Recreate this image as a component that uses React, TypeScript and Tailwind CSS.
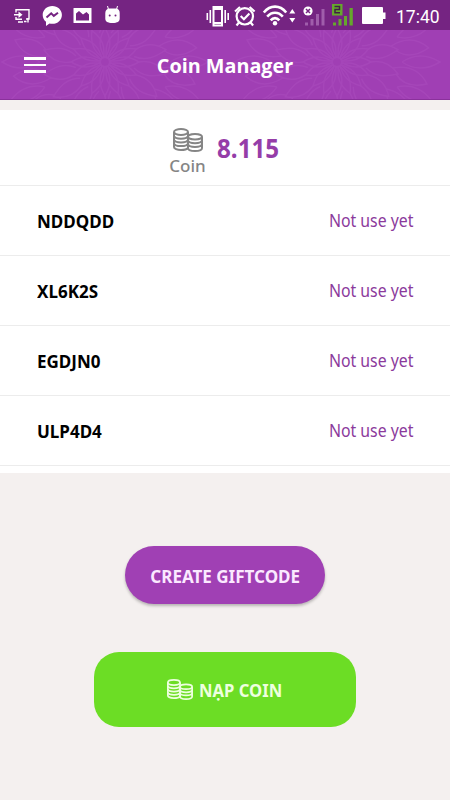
const codes = ["NDDQDD", "XL6K2S", "EGDJN0", "ULP4D4"];

const petals = Array.from({ length: 16 }, (_, i) => i * 22.5);

function Coins({ className }: { className: string }) {
	return (
		<svg className={className} viewBox="0 0 30 24" fill="none" stroke="currentColor" strokeWidth="2">
			<ellipse cx="8" cy="4" rx="7" ry="3" />
			<path d="M1 4v15c0 1.600 3.100 3 7 3s6-.8 7-2" />
			<path d="M15 4v17M1 8c1 3.600 13 3.600 14 0M1 11.700c1 3.600 13 3.600 14 0M1 15.400c1 3.600 13 3.600 14 0" />
			<ellipse cx="22" cy="8.800" rx="7" ry="2.800" />
			<path d="M15 9v11c0 1.800 3.100 3 7 3s7-1.200 7-3V9M15 12.500c1 3.600 13 3.600 14 0M15 16.200c1 3.600 13 3.600 14 0" />
		</svg>
	);
}

function Flower({ x, y }: { x: number; y: number }) {
	return (
		<g transform={`translate(${x} ${y})`}>
			{petals.map((angle) => (
				<g key={angle} transform={`rotate(${angle})`}>
					<path d="M0-4C6-14 7-22 0-34C-7-22-6-14 0-4" />
					<path d="M6-29C15-38 15-48 12-61C2-54-2-46 0-34" />
					<path d="M12-59C22-65 25-76 22-90C10-84 3-74 6-56" />
					<path d="M0-65C8-77 8-90 0-103C-8-90-8-77 0-65" />
				</g>
			))}
		</g>
	);
}

function StatusBar() {
	return (
		<div className="flex h-[30px] items-start bg-[#752482] text-white">
			<svg className="ml-[13px] h-[30px] w-[18px]" viewBox="13 0 18 30" fill="none" stroke="currentColor" strokeWidth="1.4">
				<path d="M16 12.500V9.700h13v9.300h-3M16 17v2.300h6M14 14.700h6" />
				<path d="M18.500 11.500l4 3.200-4 3.200z" fill="currentColor" stroke="none" />
				<path d="M18 22h5M24 21.500h2.500M28 18v4.500" />
			</svg>
			<svg className="ml-[11px] h-[30px] w-5" viewBox="42 0 20 30">
				<path d="M52.300 6c-5.400 0-9.600 3.900-9.600 8.900 0 2.800 1.200 5.200 3.300 6.800V26l3.500-2.500c.9.200 1.800.3 2.800.3 5.400 0 9.600-3.900 9.600-8.900S57.700 6 52.300 6z" fill="currentColor" />
				<path d="M46.500 17.500l4.700-4.200 2.600 2.600 4.200-3.200" fill="none" stroke="#752482" strokeWidth="2" />
			</svg>
			<svg className="ml-[11px] h-[30px] w-[19px]" viewBox="73 0 19 30">
				<path d="M74 8h17q.5 0 .5.500v14q0 .5-.5.500H74q-.5 0-.5-.500v-14Q73.500 8 74 8z" fill="currentColor" />
				<path d="M76 20.500v-7l3-2.500 4 3.500 3.500-2.500 2.500 2.500v6z" fill="#752482" />
			</svg>
			<svg className="ml-[12px] h-[30px] w-[17px]" viewBox="104 0 17 30">
				<path d="M105.300 13c0-3 2-4.300 4-4.500h6.400c2.500.2 4 1.500 4 4.500v5.500c0 3-2.200 4.500-7.200 4.500s-7.200-1.500-7.200-4.500z" fill="currentColor" />
				<path d="M108.500 9.500l-1-3.500M116.500 9.500l1-3.500" fill="none" stroke="currentColor" strokeWidth="1" />
				<circle cx="109.700" cy="15.400" r="1" fill="#752482" />
				<circle cx="115.500" cy="15.400" r="1" fill="#752482" />
			</svg>
			<svg className="ml-[85px] h-[30px] w-6" viewBox="206 0 24 30" fill="none" stroke="currentColor" strokeWidth="1.600">
				<path d="M213.500 7h8.500v18.500h-8.500z" strokeWidth="2" />
				<path d="M213 9h9M213 23h9" strokeWidth="2" />
				<path d="M210.300 10v13M207.300 13v7M225.200 10v13M228.200 13v7" />
			</svg>
			<svg className="ml-1 h-[30px] w-[22px]" viewBox="234 0 22 30" fill="none" stroke="currentColor" strokeWidth="2.200">
				<circle cx="244.800" cy="16.300" r="8.200" />
				<path d="M235 11.500l5-4.500M254.600 11.500l-5-4.500M239 22.500l-2.500 3M250.600 22.500l2.500 3M240.700 16l3.200 3.200 5.500-5.700" />
			</svg>
			<svg className="ml-[6px] h-[30px] w-[34px]" viewBox="262 0 34 30" fill="none" stroke="currentColor" strokeWidth="2.600">
				<path d="M263.800 12.500c6.500-7.800 16-7.800 22.400 0M267.200 16.700c4.500-5.200 11.100-5.200 15.600 0M270.700 20.300c2.500-2.900 6.100-2.900 8.600 0" />
				<circle cx="275" cy="23.200" r="2.200" fill="currentColor" stroke="none" />
				<path d="M292.300 9l3 4.500h-6zM292.300 22.500l3-4.500h-6z" fill="currentColor" stroke="none" />
			</svg>
			<svg className="ml-[7px] h-[30px] w-6" viewBox="303 0 24 30">
				<path d="M305 22.500h3v3h-3zM310.500 19h3v6.500h-3zM316 14h3v11.500h-3zM321.500 9h3v16.500h-3z" fill="#a05dab" />
				<circle cx="308" cy="11" r="4.600" fill="currentColor" />
				<path d="M306 9l4 4m0-4l-4 4" stroke="#752482" strokeWidth="1.500" />
			</svg>
			<svg className="ml-1 h-[30px] w-6" viewBox="331 0 24 30">
				<path d="M333 22.500h3v3h-3zM338.500 19h3v6.500h-3zM344 16h3v9.500h-3zM349.500 8h3.300v17.500h-3.300z" fill="#66a82c" />
				<path d="M332 4h10.500v11.500H332z" fill="#66a82c" />
				<path d="M334.500 6.500h5v3h-4.500v3.300h5" fill="none" stroke="#402043" strokeWidth="1.500" />
			</svg>
			<svg className="ml-[6px] h-[30px] w-[26px]" viewBox="361 0 26 30">
				<path d="M363 7h19q1 0 1 1v4.500h2.500v6.500h-2.500v4q0 1-1 1h-19q-1 0-1-1V8q0-1 1-1z" fill="currentColor" />
			</svg>
			<span className="ml-[9px] mt-[3px] font-['Roboto',sans-serif] text-[17.500px] leading-[28px]">17:40</span>
		</div>
	);
}

function Header() {
	return (
		<header className="relative h-[70px] overflow-hidden border-b border-[#8a319b] bg-[#a03fb4] text-white">
			<svg className="absolute inset-0 h-[70px] w-[450px]" viewBox="0 0 450 70" fill="none" stroke="#b255c4" strokeWidth="1.500" opacity=".32">
				<Flower x={105} y={32} />
				<Flower x={337} y={32} />
			</svg>
			<div className="relative flex h-[70px] items-center justify-center">
				<button className="absolute left-6 top-[27px] flex w-[22px] flex-col gap-[4px]" aria-label="Menu">
					<span className="h-[2.5px] w-full bg-white" />
					<span className="h-[2.5px] w-full bg-white" />
					<span className="h-[2.5px] w-full bg-white" />
				</button>
				<h1 className="pt-px font-['Open_Sans',sans-serif] text-[19.800px] font-bold">Coin Manager</h1>
			</div>
		</header>
	);
}

export default function App() {
	return (
		<div className="h-[800px] w-[450px] overflow-hidden bg-[#f4f0ef] font-['Noto_Sans',sans-serif]">
			<StatusBar />
			<Header />
			<main className="pt-[10px]">
				<section className="h-[363px] bg-white">
					<div className="flex h-[76px] border-b border-[#ececec] pl-[169px]">
						<div className="flex w-[37px] flex-col items-center pt-[18px] text-[#858585]">
							<Coins className="h-6 w-[30px]" />
							<span className="text-[17px] font-medium leading-[28px]">Coin</span>
						</div>
						<span className="ml-[11px] mt-[20px] origin-left scale-x-[0.93] text-[26px] font-bold leading-[36px] text-[#953da8]">8.115</span>
					</div>
					{codes.map((code) => (
						<div key={code} className="flex h-[70px] items-center justify-between border-b border-[#ececec] px-[37px]">
							<span className="origin-left scale-x-[0.945] pt-[2px] text-[18px] font-bold text-black">{code}</span>
							<span className="origin-right scale-x-[0.905] text-[17.500px] text-[#8b3a9c]">Not use yet</span>
						</div>
					))}
				</section>
				<div className="flex flex-col items-center pt-[73px]">
					<button className="flex h-[58px] w-[200px] items-center justify-center rounded-full bg-[#a040b4] text-[18px] font-bold text-[#fbe9ff] shadow-[0_2px_3px_rgba(0,0,0,0.25)]">
						<span className="scale-x-[0.945] whitespace-nowrap pt-[2px]">CREATE GIFTCODE</span>
					</button>
					<button className="mt-[48px] flex h-[75px] w-[262px] items-center rounded-[25px] bg-[#6cdd25] pl-[73px] text-[18px] font-bold text-[#edffdf]">
						<Coins className="h-[21px] w-[26px]" />
						<span className="ml-[6px] origin-left scale-x-[0.925] whitespace-nowrap pt-[2px]">NẠP COIN</span>
					</button>
				</div>
			</main>
		</div>
	);
}
